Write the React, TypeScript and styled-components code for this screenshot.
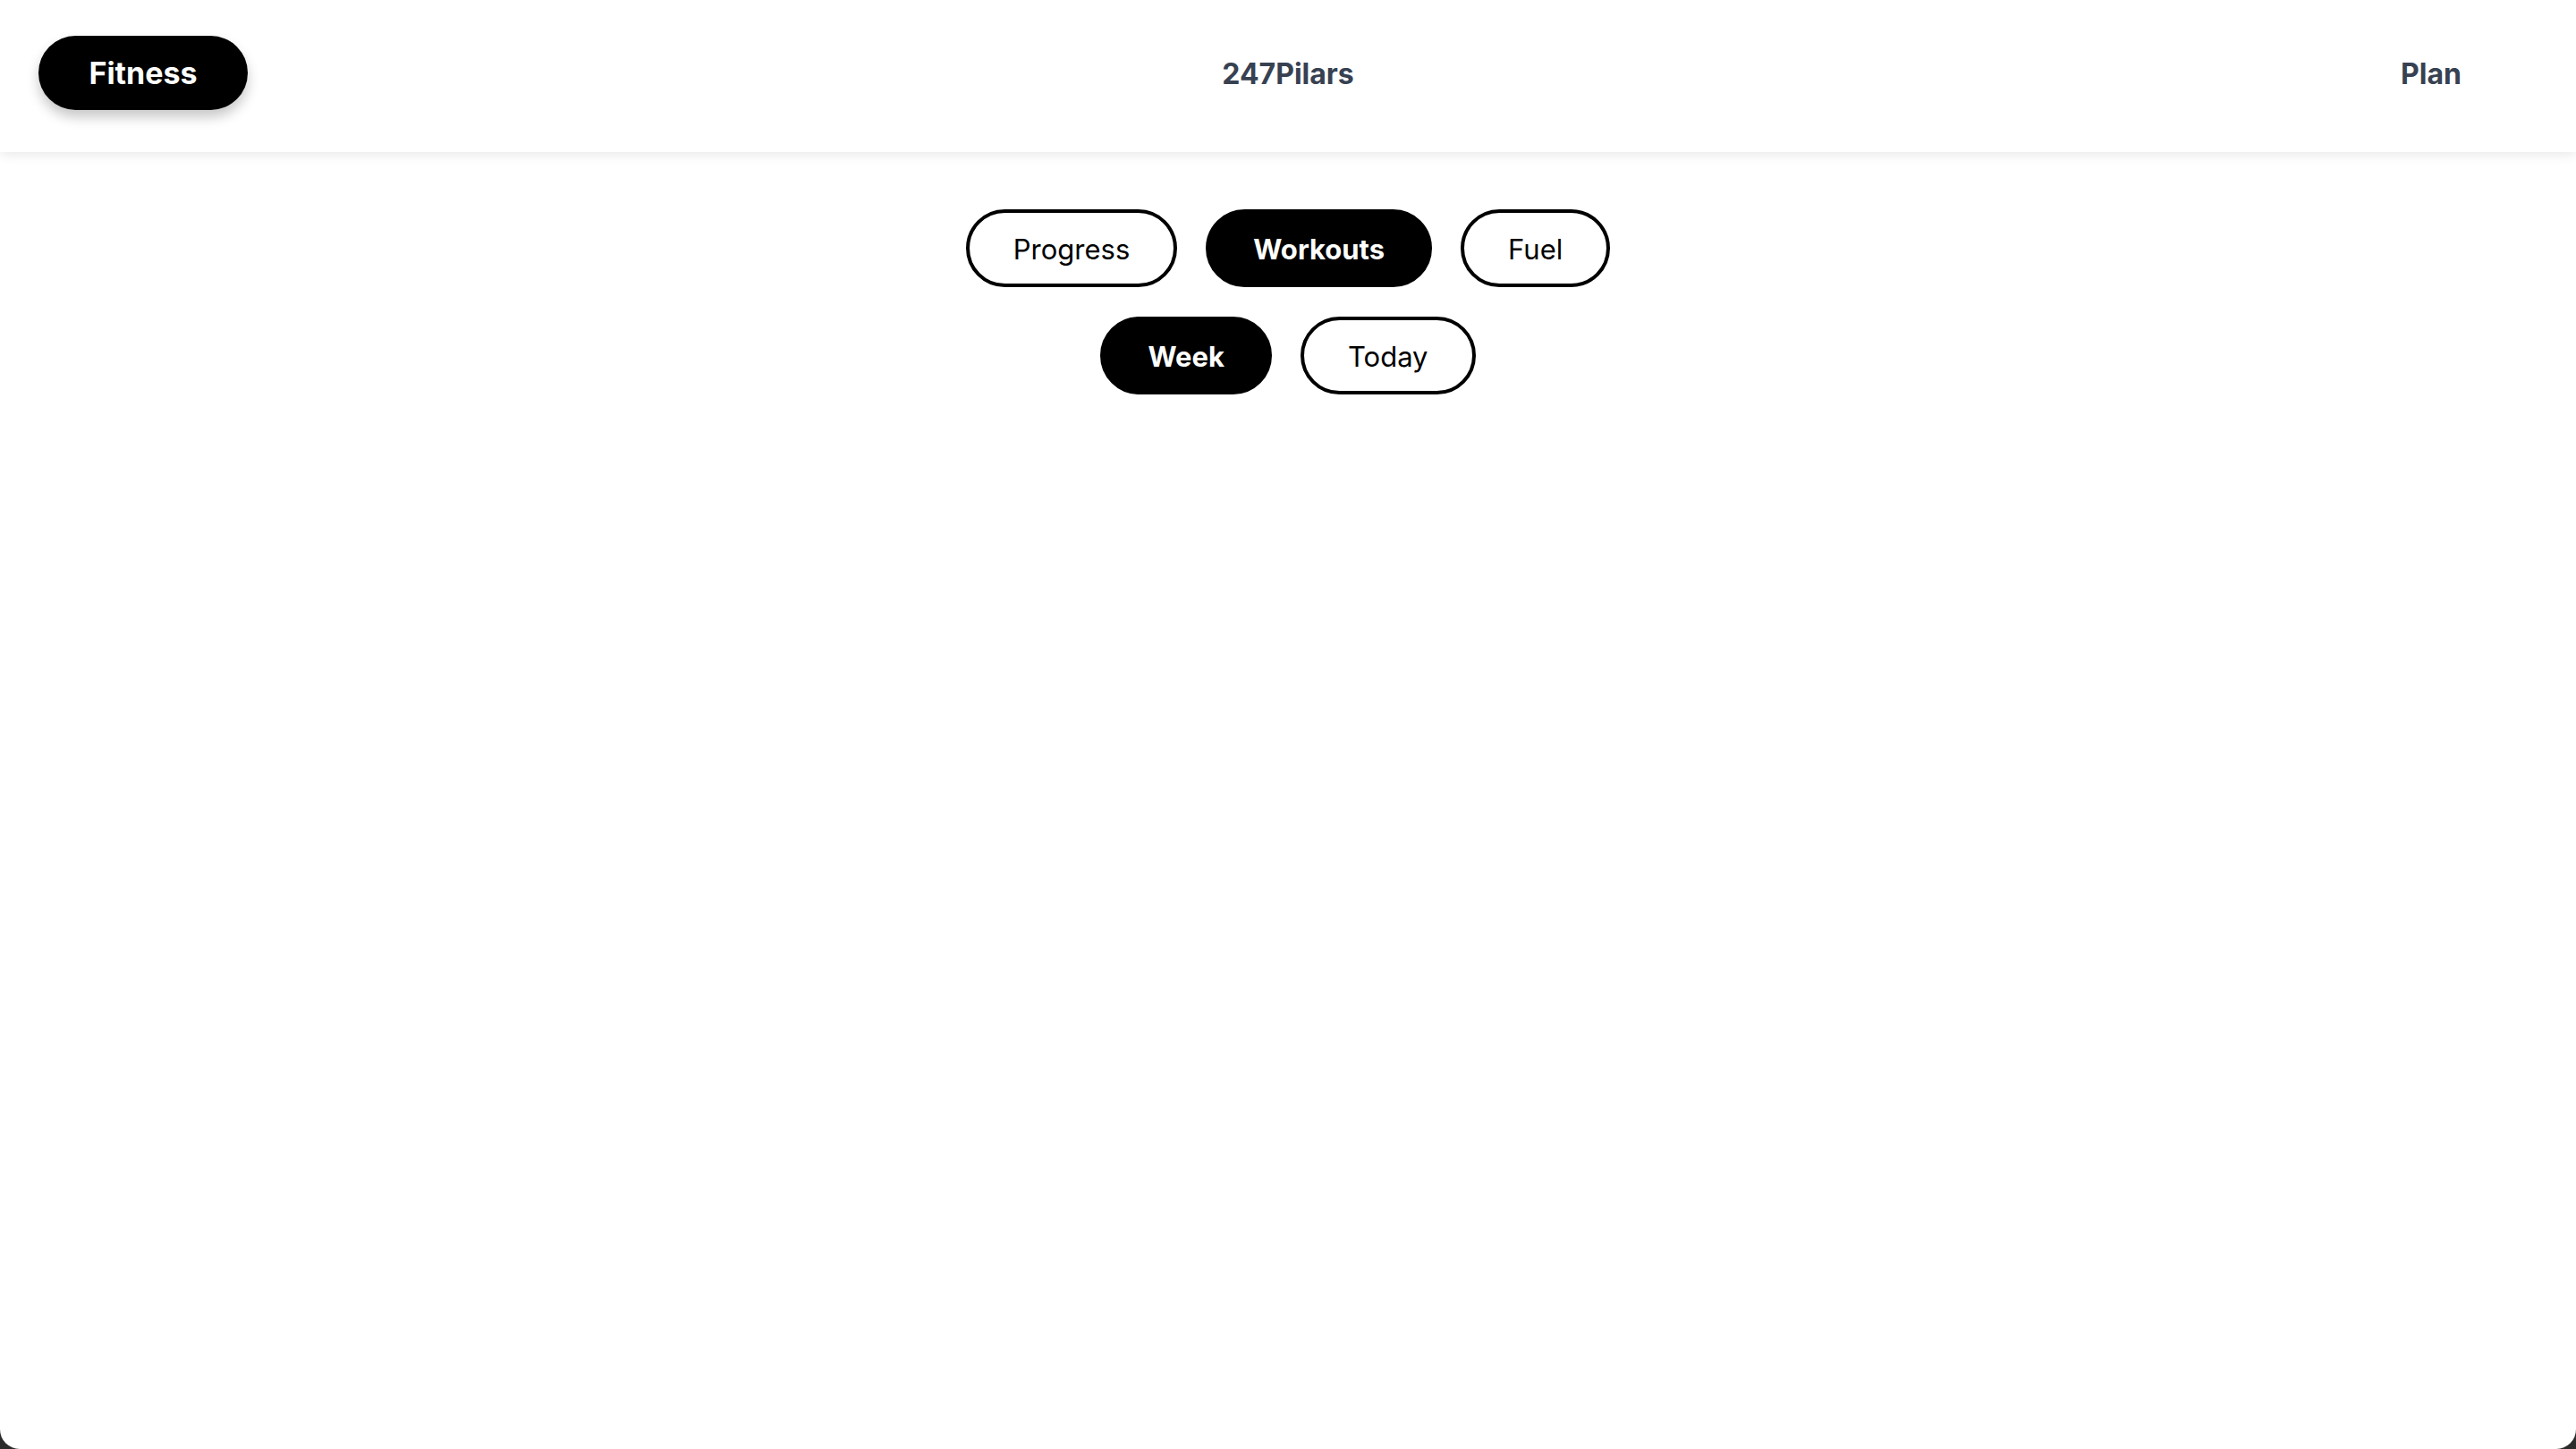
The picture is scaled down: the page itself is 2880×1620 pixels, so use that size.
import React, { useState } from 'react'
import styled, { createGlobalStyle } from 'styled-components';

const GlobalStyle = createGlobalStyle`
  html, body {
    margin: 0;
    padding: 0;
    background: #2b2b2b;
  }
  body {
    font-family: Inter, "Noto Sans", sans-serif;
  }
`;

const Page = styled.div`
  min-height: 1620px;
  background: #fff;
  border-radius: 0 0 22px 22px;
  overflow: hidden;
`;

const Header = styled.header`
  height: 170px;
  box-sizing: border-box;
  padding: 40px 43px 47px;
  display: grid;
  grid-template-columns: 1fr auto 1fr;
  align-items: center;
  background: #fff;
  box-shadow: 0 3px 12px rgba(0, 0, 0, 0.09);
  position: relative;
`;

const BrandButton = styled.button`
  justify-self: start;
  width: 234px;
  height: 83px;
  border: none;
  border-radius: 999px;
  background: #000;
  color: #fff;
  font-family: Inter, sans-serif;
  font-weight: 700;
  font-size: 34px;
  box-shadow: 0 8px 14px rgba(0, 0, 0, 0.22);
  cursor: pointer;
`;

const Title = styled.div`
  font-weight: 700;
  font-size: 32px;
  color: #374151;
  padding-top: 2px;
`;

const NavLink = styled.a`
  justify-self: end;
  margin-right: 85px;
  padding-top: 2px;
  font-weight: 700;
  font-size: 32px;
  color: #374151;
  text-decoration: none;
  cursor: pointer;
`;

const Content = styled.main`
  padding-top: 64px;
  display: flex;
  flex-direction: column;
  align-items: center;
  gap: 33px;
`;

const PillRow = styled.div`
  display: flex;
  gap: 32px;
`;

const Pill = styled.button<{ $active?: boolean }>`
  height: 87px;
  padding: 2px 49px 0;
  border: 4px solid #000;
  border-radius: 999px;
  background: ${p => (p.$active ? '#000' : '#fff')};
  color: ${p => (p.$active ? '#fff' : '#000')};
  font-family: Inter, sans-serif;
  font-size: 31px;
  font-weight: ${p => (p.$active ? 700 : 400)};
  cursor: pointer;
`;

export default function App() {
  const [section, setSection] = useState('Workouts');
  const [range, setRange] = useState('Week');

  return (
    <>
      <GlobalStyle />
      <Page>
        <Header>
          <BrandButton>Fitness</BrandButton>
          <Title>247Pilars</Title>
          <NavLink>Plan</NavLink>
        </Header>
        <Content>
          <PillRow>
            {['Progress', 'Workouts', 'Fuel'].map(s => (
              <Pill key={s} $active={section === s} onClick={() => setSection(s)}>
                {s}
              </Pill>
            ))}
          </PillRow>
          <PillRow>
            {['Week', 'Today'].map(r => (
              <Pill key={r} $active={range === r} onClick={() => setRange(r)}>
                {r}
              </Pill>
            ))}
          </PillRow>
        </Content>
      </Page>
    </>
  );
}
